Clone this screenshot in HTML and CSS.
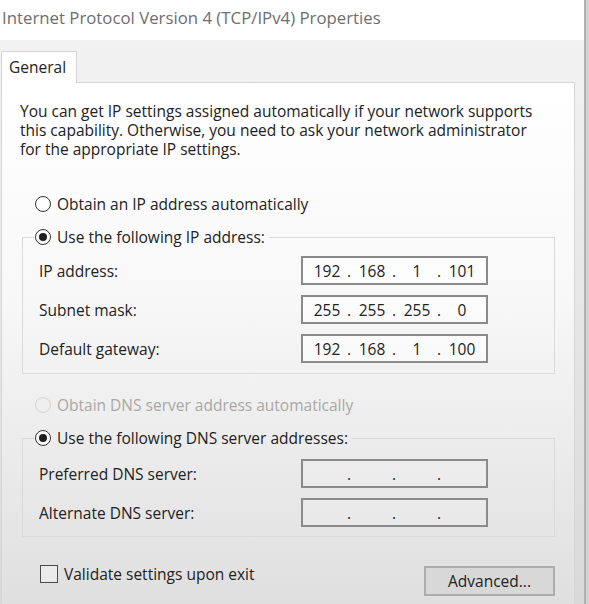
FILE: index.html
```html
<!DOCTYPE html>
<html lang="en">
<head>
    <meta charset="UTF-8">
    <title>Internet Protocol Version 4 (TCP/IPv4) Properties</title>
    <link rel="stylesheet" href="styles.css">
</head>
<body>
    <div class="window">
        <div class="titlebar">Internet Protocol Version 4 (TCP/IPv4) Properties</div>

        <div class="dialog">
            <div class="tabs">
                <div class="tab">General</div>
            </div>

            <div class="panel">
                <p class="intro">You can get IP settings assigned automatically if your network supports<br>this capability. Otherwise, you need to ask your network administrator<br>for the appropriate IP settings.</p>

                <div class="option first"><span class="radio"></span>Obtain an IP address automatically</div>

                <fieldset class="group">
                    <legend class="option"><span class="radio on"></span>Use the following IP address:</legend>
                    <div class="row">
                        <span class="label">IP address:</span>
                        <span class="ip"><span>192</span><i>.</i><span>168</span><i>.</i><span>1</span><i>.</i><span>101</span></span>
                    </div>
                    <div class="row">
                        <span class="label">Subnet mask:</span>
                        <span class="ip"><span>255</span><i>.</i><span>255</span><i>.</i><span>255</span><i>.</i><span>0</span></span>
                    </div>
                    <div class="row">
                        <span class="label">Default gateway:</span>
                        <span class="ip"><span>192</span><i>.</i><span>168</span><i>.</i><span>1</span><i>.</i><span>100</span></span>
                    </div>
                </fieldset>

                <div class="option disabled dns"><span class="radio"></span>Obtain DNS server address automatically</div>

                <fieldset class="group dns-group">
                    <legend class="option"><span class="radio on"></span>Use the following DNS server addresses:</legend>
                    <div class="row">
                        <span class="label">Preferred DNS server:</span>
                        <span class="ip empty"><span></span><i>.</i><span></span><i>.</i><span></span><i>.</i><span></span></span>
                    </div>
                    <div class="row">
                        <span class="label">Alternate DNS server:</span>
                        <span class="ip empty"><span></span><i>.</i><span></span><i>.</i><span></span><i>.</i><span></span></span>
                    </div>
                </fieldset>

                <div class="footer">
                    <div class="check"><span class="box"></span>Validate settings upon exit</div>
                    <button class="btn">Advanced...</button>
                </div>
            </div>
        </div>
    </div>
</body>
</html>
```

FILE: styles.css
```css
* {
    box-sizing: border-box;
    margin: 0;
    padding: 0;
}

body {
    width: 589px;
    height: 604px;
    overflow: hidden;
    background: #d2d2d2;
    font-family: 'Open Sans', sans-serif;
    font-size: 15.5px;
    color: #222;
}

.window {
    width: 586px;
    height: 604px;
    border-right: 2px solid #b2b2b2;
    display: flex;
    flex-direction: column;
}

.titlebar {
    height: 40px;
    flex: none;
    background: #fff;
    padding: 6px 0 0 2px;
    font-size: 16.8px;
    color: #6e6e6e;
    white-space: nowrap;
}

.dialog {
    flex: 1;
    min-height: 0;
    display: flex;
    flex-direction: column;
    background: linear-gradient(#f2f2f2, #d9d9d9);
    padding: 0 0 0 1px;
}

.tabs {
    display: flex;
    padding-top: 11px;
}

.tab {
    width: 76px;
    height: 32px;
    margin-bottom: -1px;
    position: relative;
    background: #fff;
    border: 1px solid #d6d6d6;
    border-bottom: none;
    padding: 4px 0 0 7px;
}

.panel {
    width: 574px;
    flex: 1;
    min-height: 0;
    overflow: hidden;
    background: linear-gradient(#fff 0%, #f8f8f8 40%, #dfdfdf 100%);
    border: 1px solid #d6d6d6;
    border-bottom: none;
    padding: 19px 0 0 18px;
}

.intro {
    line-height: 19px;
    white-space: nowrap;
}

.option {
    display: flex;
    align-items: center;
    height: 20px;
    white-space: nowrap;
}

.option.first {
    margin: 35px 0 0 15px;
}

.option.dns {
    margin: 21px 0 0 15px;
}

.disabled {
    color: #a8a8a8;
}

.radio {
    width: 16px;
    height: 16px;
    border: 1.5px solid #333;
    border-radius: 50%;
    margin-right: 6px;
    display: flex;
    align-items: center;
    justify-content: center;
    background: #fff;
}

.radio.on::after {
    content: "";
    width: 8px;
    height: 8px;
    border-radius: 50%;
    background: #1e1e1e;
}

.disabled .radio {
    border-color: #d2d2d2;
    background: transparent;
}

.group {
    width: 533px;
    margin: 13px 0 0 2px;
    padding: 0 0 10px 11px;
    border: 1px solid #dadada;
    min-width: 0;
}

.group legend {
    padding: 0 4px 0 1px;
}

.dns-group {
    padding-bottom: 9px;
}

.row {
    display: flex;
    align-items: center;
    height: 29px;
    margin-top: 10px;
    padding-left: 5px;
}

.group legend + .row {
    margin-top: 9px;
}

.dns-group legend + .row {
    margin-top: 11px;
}

.label {
    width: 262px;
}

.ip {
    width: 187px;
    height: 29px;
    border: 2px solid #8a8a8a;
    background: rgba(255, 255, 255, 0.6);
    display: flex;
    align-items: center;
    padding-left: 4px;
}

.ip.empty {
    background: rgba(255, 255, 255, 0.15);
}

.ip span {
    width: 40px;
    text-align: center;
}

.ip i {
    font-style: normal;
    width: 5px;
}

.footer {
    width: 535px;
    margin-top: 29px;
    display: flex;
    justify-content: space-between;
    align-items: flex-start;
}

.check {
    display: flex;
    align-items: center;
    height: 20px;
    margin: -2px 0 0 20px;
}

.box {
    width: 18px;
    height: 18px;
    border: 1.5px solid #4a4a4a;
    margin-right: 6px;
    background: rgba(255, 255, 255, 0.3);
}

.btn {
    width: 131px;
    height: 30px;
    font-family: 'Open Sans', sans-serif;
    font-size: 15.5px;
    color: #222;
    background: #d8d8d8;
    border: 2px solid #adadad;
}
```
